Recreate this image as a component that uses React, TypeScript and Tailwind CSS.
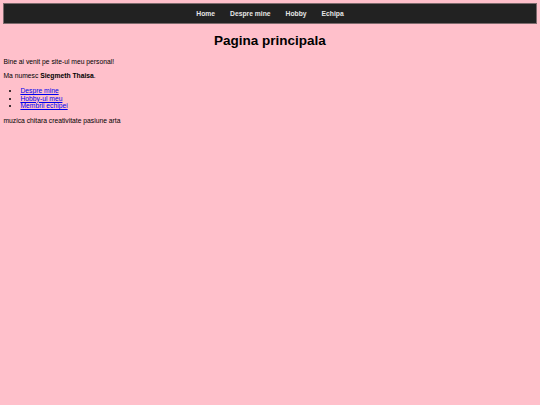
export default function App() {
  const font = { fontFamily: '"Liberation Sans", Arial, sans-serif' };
  return (
    <div className="min-h-[405px] w-full bg-[#ffc0cb] p-[3.4px] text-black" style={font}>
      <nav className="flex h-[21px] items-center justify-center gap-[15px] border border-[#7d6a6d] bg-[#222222]">
        {["Home", "Despre mine", "Hobby", "Echipa"].map((t) => (
          <a key={t} className="text-[6.75px] font-bold text-[#e6e6e6]">
            {t}
          </a>
        ))}
      </nav>
      <h1 className="my-[9px] text-center text-[13.5px] font-bold leading-[1.15]">Pagina principala</h1>
      <p className="my-[6.75px] text-[6.75px] leading-[1.15]">Bine ai venit pe site-ul meu personal!</p>
      <p className="my-[6.75px] text-[6.75px] leading-[1.15]">
        Ma numesc <strong>Siegmeth Thaisa</strong>.
      </p>
      <ul className="my-[6.75px] list-disc pl-[17px] text-[6.75px] leading-[1.15]">
        <li>
          <a className="text-[#0000ee] underline">Despre mine</a>
        </li>
        <li>
          <a className="text-[#0000ee] underline">Hobby-ul meu</a>
        </li>
        <li>
          <a className="text-[#0000ee] underline">Membrii echipei</a>
        </li>
      </ul>
      <p className="my-[6.75px] text-[6.75px] leading-[1.15]">muzica chitara creativitate pasiune arta</p>
    </div>
  );
}
